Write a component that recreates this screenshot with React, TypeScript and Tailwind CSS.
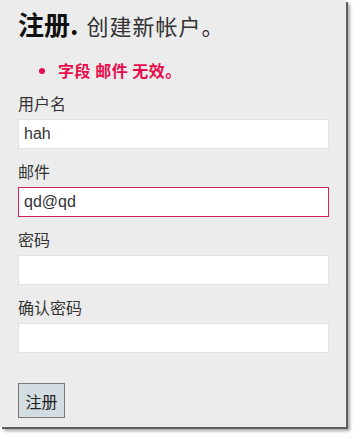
import { useState } from "react";

const font = "font-['Noto_Sans_CJK_SC','Noto_Sans',sans-serif]";

function Field({
  label,
  value,
  onChange,
  type = "text",
  error = false,
}: {
  label: string;
  value: string;
  onChange: (v: string) => void;
  type?: string;
  error?: boolean;
}) {
  return (
    <div className="flex flex-col mb-[12px]">
      <label className="text-[16px] leading-[20px] text-[#333]">{label}</label>
      <input
        type={type}
        value={value}
        onChange={(e) => onChange(e.target.value)}
        className={`mt-[6px] w-[311px] h-[30px] bg-white px-[5px] text-[16px] text-[#333] outline-none border ${
          error ? "border-[#d2205a]" : "border-[#e2e2e2]"
        } font-['Liberation_Sans','Noto_Sans_CJK_SC',sans-serif]`}
      />
    </div>
  );
}

export default function App() {
  const [user, setUser] = useState("hah");
  const [mail, setMail] = useState("qd@qd");
  const [pass, setPass] = useState("");
  const [confirm, setConfirm] = useState("");

  return (
    <div className={`w-[360px] h-[439px] bg-white ${font}`}>
      <div className="w-[346px] h-[427px] bg-[#ececec] pl-[18px] pt-[9px] shadow-[2px_2px_0_#5e5e5e,4px_4px_3px_rgba(0,0,0,0.35)]">
        <h1 className="flex items-baseline leading-[30px] text-[#111]">
          <span className="text-[26px] font-bold">注册.</span>
          <span className="ml-[8px] text-[22px] tracking-[1px] font-normal text-[#333]">创建新帐户。</span>
        </h1>

        <ul className="mt-[20px] list-disc pl-[40px] text-[16px] tracking-[0.5px] leading-[20px] font-bold text-[#e80c4d]">
          <li>字段 邮件 无效。</li>
        </ul>

        <form className="mt-[13px] flex flex-col">
          <Field label="用户名" value={user} onChange={setUser} />
          <Field label="邮件" value={mail} onChange={setMail} error />
          <Field label="密码" value={pass} onChange={setPass} type="password" />
          <Field label="确认密码" value={confirm} onChange={setConfirm} type="password" />

          <div className="mt-[18px]">
            <button
              type="button"
              className="w-[47px] h-[35px] bg-[#d3dce0] border border-[#787878] text-[16px] text-[#222] cursor-pointer"
            >
              注册
            </button>
          </div>
        </form>
      </div>
    </div>
  );
}
